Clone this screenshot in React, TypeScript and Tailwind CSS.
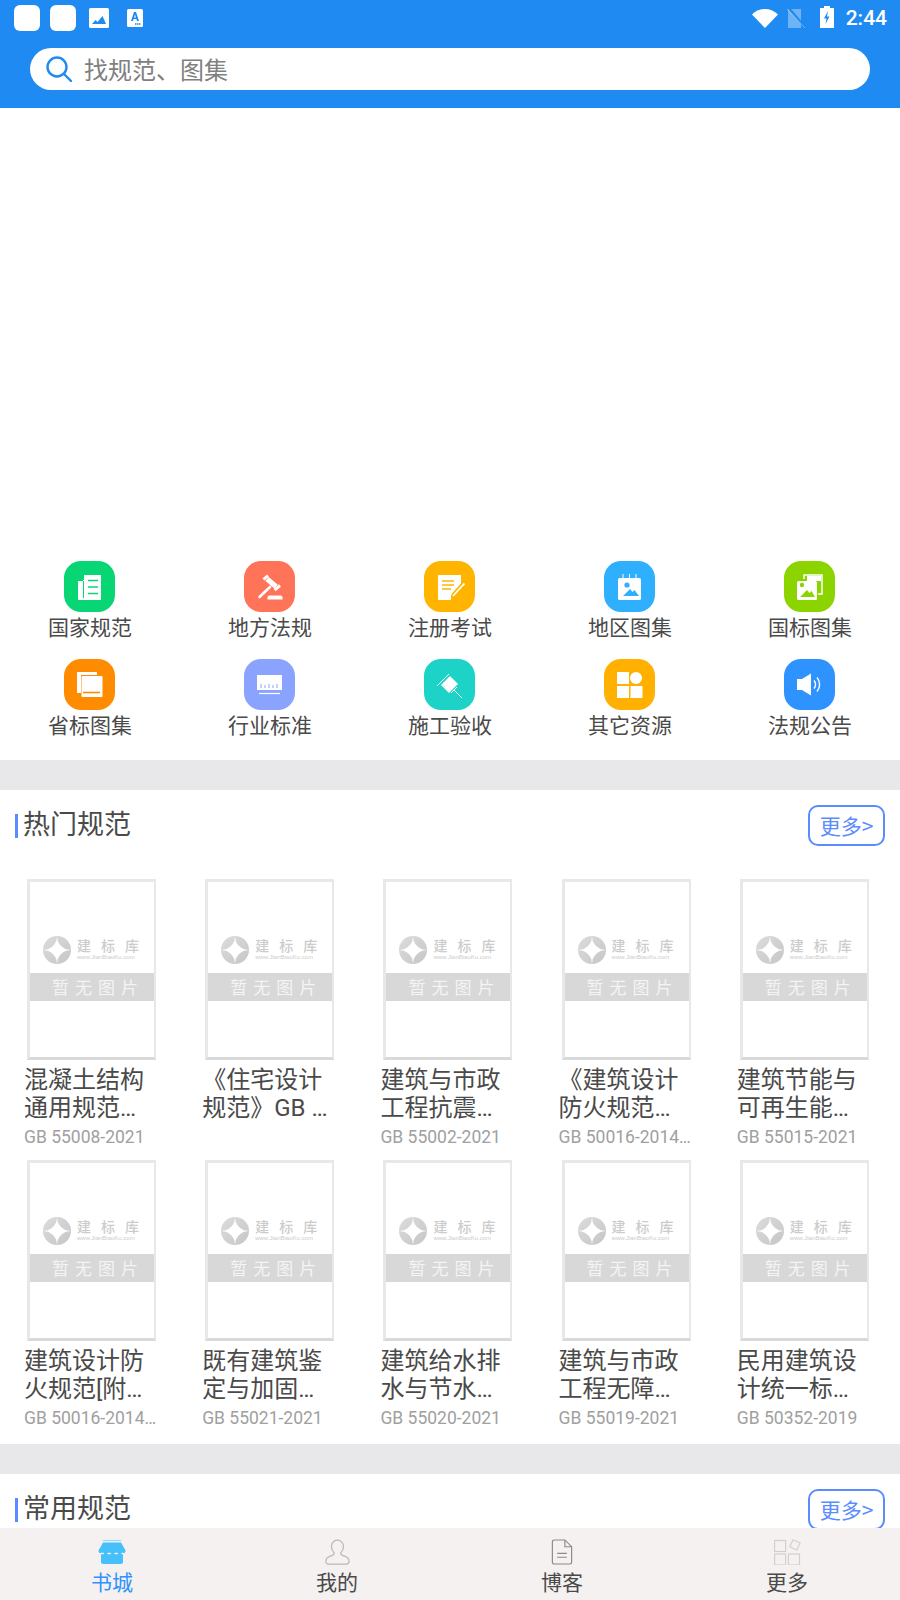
import React from "react";

const F = "font-['Noto_Sans_CJK_SC','Noto_Sans',sans-serif]";

function Ic({ children }: { children: React.ReactNode }) {
  return (
    <svg viewBox="0 0 51 51" className="w-[51px] h-[51px]" fill="none">
      {children}
    </svg>
  );
}

const icons: { label: string; bg: string; icon: React.ReactNode }[] = [
  {
    label: "国家规范",
    bg: "bg-[#08d573]",
    icon: (
      <Ic>
        <path d="M20 14h17v25H14V20h5v-1h1z" fill="#fff" />
        <path d="M19.500 20v17" stroke="#08d573" strokeWidth="1" />
        <path d="M24 19.500h10M24 26h10M24 32.500h10" stroke="#08d573" strokeWidth="1.300" />
      </Ic>
    ),
  },
  {
    label: "地方法规",
    bg: "bg-[#ff7359]",
    icon: (
      <Ic>
        <path d="M19.500 18.500L24 14.500" stroke="#fff" strokeWidth="3" />
        <path d="M30.500 29l5.500-4.500" stroke="#fff" strokeWidth="3" />
        <path d="M23 18l9 7.500" stroke="#fff" strokeWidth="5" />
        <path d="M26 26L15.500 36" stroke="#fff" strokeWidth="2.600" strokeLinecap="round" />
        <path d="M23.500 38.500h15v-2a2 2 0 00-2-2h-11a2 2 0 00-2 2z" fill="#fff" />
      </Ic>
    ),
  },
  {
    label: "注册考试",
    bg: "bg-[#ffb400]",
    icon: (
      <Ic>
        <path d="M14 14h23v9L27 34v5H14z" fill="#fff" />
        <path d="M18 20h12M18 24h12M18 28h9" stroke="#ffb400" strokeWidth="1.300" />
        <path d="M29 35l10-11 1.500-1.500" stroke="#fff" strokeWidth="1.800" />
        <path d="M28 33l9-10" stroke="#ffb400" strokeWidth="1" />
      </Ic>
    ),
  },
  {
    label: "地区图集",
    bg: "bg-[#2eb0ff]",
    icon: (
      <Ic>
        <rect x="14" y="17" width="23" height="22" rx="1.500" fill="#fff" />
        <path d="M19 13v7M25.500 13v7M32 13v7" stroke="#fff" strokeWidth="1" />
        <circle cx="23" cy="24" r="2.600" fill="#2eb0ff" />
        <path d="M19 35l7-7 2.500 3 2-2 4.500 6z" fill="#2eb0ff" />
      </Ic>
    ),
  },
  {
    label: "国标图集",
    bg: "bg-[#8bd400]",
    icon: (
      <Ic>
        <path d="M20 18v-4h18v19h-4" stroke="#fff" strokeWidth="1.500" />
        <rect x="13" y="20" width="20" height="19" rx="1.500" fill="#fff" />
        <rect x="23" y="15" width="14" height="5" fill="#fff" />
        <circle cx="18" cy="24" r="2.200" fill="#8bd400" />
        <path d="M16 36l7-7 2.500 3 2-2 3.500 6z" fill="#8bd400" />
      </Ic>
    ),
  },
  {
    label: "省标图集",
    bg: "bg-[#ff8b00]",
    icon: (
      <Ic>
        <path d="M13 13h20v3H17v18h-4z" fill="#fff" />
        <rect x="17.500" y="17" width="21" height="21" rx="1" fill="#fff" />
        <path d="M19 33.500h17" stroke="#ff8b00" strokeWidth="1.600" />
      </Ic>
    ),
  },
  {
    label: "行业标准",
    bg: "bg-[#89a3ff]",
    icon: (
      <Ic>
        <rect x="13" y="16" width="25" height="15" fill="#fff" />
        <path d="M17 25v4M21 26v3M25 25v4M29 26v3M33 25v4" stroke="#89a3ff" strokeWidth="1" />
        <path d="M15 34.500h21" stroke="#fff" strokeWidth="1.200" />
      </Ic>
    ),
  },
  {
    label: "施工验收",
    bg: "bg-[#1dd2c6]",
    icon: (
      <Ic>
        <path d="M13 27l12-12" stroke="#fff" strokeWidth="1" />
        <path d="M26 17l8 8-9 9-8-8z" fill="#fff" />
        <path d="M30 31l8 8" stroke="#fff" strokeWidth="1" />
        <path d="M33 28l-6 6" stroke="#fff" strokeWidth="1" />
      </Ic>
    ),
  },
  {
    label: "其它资源",
    bg: "bg-[#ffb000]",
    icon: (
      <Ic>
        <rect x="13" y="13" width="12" height="12" fill="#fff" />
        <circle cx="32" cy="19" r="6" fill="#fff" />
        <rect x="13" y="27" width="12" height="12" fill="#fff" />
        <rect x="26.500" y="27" width="12" height="12" fill="#fff" />
      </Ic>
    ),
  },
  {
    label: "法规公告",
    bg: "bg-[#2f93ff]",
    icon: (
      <Ic>
        <path d="M13 20h5l9-5.500v22L18 31h-5z" fill="#fff" />
        <path d="M30 21.500c2 2.500 2 5.500 0 8" stroke="#fff" strokeWidth="1.400" />
        <path d="M33 18.500c3.500 4 3.500 10 0 14" stroke="#fff" strokeWidth="1.400" />
      </Ic>
    ),
  },
];

function Logo() {
  return (
    <svg viewBox="0 0 28 28" className="w-[28px] h-[28px] shrink-0">
      <defs>
        <linearGradient id="wm" x1="0" y1="0" x2="1" y2="1">
          <stop offset="0" stopColor="#dcdcdc" />
          <stop offset="1" stopColor="#c6c6c6" />
        </linearGradient>
      </defs>
      <circle cx="14" cy="14" r="14" fill="url(#wm)" />
      <path d="M14 0L14.700 5Q17.200 10.800 23 13.300L28 14L23 14.700Q17.200 17.200 14.700 23L14 28L13.300 23Q10.800 17.200 5 14.700L0 14L5 13.300Q10.800 10.800 13.300 5z" fill="#fff" />
    </svg>
  );
}

function Book({ title, code }: { title: string[]; code: string }) {
  return (
    <div className="pl-[24px] pr-[8px]">
      <div className="ml-[3px] w-[129px] h-[181px] border-l-[3px] border-r-[2px] border-t-[3px] border-b-[3px] border-[#e8e8e8] border-b-[#d9d9d9] bg-white flex flex-col">
        <div className="h-[54px]" />
        <div className="h-[28px] flex items-center pl-[13px] gap-[6px]">
          <Logo />
          <div className="flex flex-col items-start -mt-[1px]">
            <span className="text-[14px] leading-[15px] tracking-[10px] font-medium text-[#cccccc] whitespace-nowrap">建标库</span>
            <span className="text-[6px] leading-[8px] text-[#cccccc] font-['Liberation_Sans',sans-serif] whitespace-nowrap">www.JianBiaoKu.com</span>
          </div>
        </div>
        <div className="h-[9px]" />
        <div className="h-[28px] bg-[#d8d8d8] text-[#f4f4f4] text-[17px] leading-[28px] tracking-[6px] text-center pl-[12px] whitespace-nowrap">暂无图片</div>
      </div>
      <div className="mt-[6px] h-[56px] text-[24px] leading-[28px] text-[#4a4a4a] whitespace-nowrap font-['Roboto','Noto_Sans_CJK_SC',sans-serif]">
        {title.map((t) => (
          <div key={t}>{t}</div>
        ))}
      </div>
      <div className="mt-[2px] h-[26px] text-[17.500px] leading-[26px] text-[#a0a0a0] whitespace-nowrap font-['Roboto',sans-serif]">{code}</div>
    </div>
  );
}

function Header({ title }: { title: string }) {
  return (
    <div className="flex items-start justify-between px-[15px] pt-[15px]">
      <div className="flex items-center h-[41px]">
        <div className="w-[3px] h-[24px] bg-[#5a8cff]" />
        <div className="ml-[5px] mb-[6px] text-[27px] leading-[35px] text-[#4a4a4a] whitespace-nowrap">{title}</div>
      </div>
      <div className="w-[77px] h-[41px] border-2 border-[#5a8cff] rounded-[10px] flex items-center justify-center bg-white text-[#5a8cff] text-[21px] leading-none whitespace-nowrap">
        更多&gt;
      </div>
    </div>
  );
}

const row1 = [
  { title: ["混凝土结构", "通用规范…"], code: "GB 55008-2021" },
  { title: ["《住宅设计", "规范》GB …"], code: "" },
  { title: ["建筑与市政", "工程抗震…"], code: "GB 55002-2021" },
  { title: ["《建筑设计", "防火规范…"], code: "GB 50016-2014…" },
  { title: ["建筑节能与", "可再生能…"], code: "GB 55015-2021" },
];
const row2 = [
  { title: ["建筑设计防", "火规范[附…"], code: "GB 50016-2014…" },
  { title: ["既有建筑鉴", "定与加固…"], code: "GB 55021-2021" },
  { title: ["建筑给水排", "水与节水…"], code: "GB 55020-2021" },
  { title: ["建筑与市政", "工程无障…"], code: "GB 55019-2021" },
  { title: ["民用建筑设", "计统一标…"], code: "GB 50352-2019" },
];

function NavItem({ label, active, children }: { label: string; active?: boolean; children: React.ReactNode }) {
  return (
    <div className="flex flex-col items-center pt-[11px] pr-[1px]">
      {children}
      <div className={`mt-[1px] text-[21px] leading-[30px] ${active ? "text-[#2f93ff]" : "text-[#4a4a4a]"}`}>{label}</div>
    </div>
  );
}

export default function App() {
  return (
    <div className={`w-[900px] h-[1600px] flex flex-col overflow-hidden bg-white ${F}`}>
      {/* Top bar */}
      <div className="h-[108px] shrink-0 bg-[#1f8bf2] flex flex-col">
        <div className="h-[48px] flex items-start justify-between pt-[5px] pl-[14px] pr-[13px]">
          <div className="flex items-start">
            <div className="w-[26px] h-[26px] rounded-[6px] bg-white" />
            <div className="ml-[10px] w-[26px] h-[26px] rounded-[6px] bg-white" />
            <svg viewBox="0 0 20 20" className="ml-[13px] mt-[3px] w-[20px] h-[20px]">
              <rect width="20" height="20" rx="1.500" fill="#fff" />
              <path d="M3 16l3.500-4 2 2 5-6 3.500 8z" fill="#1f8bf2" />
            </svg>
            <svg viewBox="0 0 16 18" className="ml-[18px] mt-[4px] w-[16px] h-[18px]">
              <rect width="16" height="18" rx="1.500" fill="#fff" />
              <path d="M4 12L7 3h2l3 9h-2l-.6-2H6.600L6 12zM7.100 8.500h1.800L8 5.500z" fill="#1f8bf2" />
              <path d="M8 15h6" stroke="#1f8bf2" strokeWidth="1.500" strokeDasharray="1.500 .5" />
            </svg>
          </div>
          <div className="flex items-start">
            <svg viewBox="0 0 26 20" className="mt-[3px] w-[26px] h-[20px]">
              <path d="M0 6.500C3.500 3 8 1 13 1s9.500 2 13 5.500L13 20z" fill="#fff" />
            </svg>
            <svg viewBox="0 0 20 20" className="ml-[8px] mt-[3px] w-[20px] h-[20px]">
              <path d="M2 1h13v19H2z" fill="#fff" opacity=".35" />
              <path d="M2.800 0L18.800 19" stroke="#1f8bf2" strokeWidth="2.400" />
              <path d="M1 1l18 19" stroke="#fff" strokeWidth="1" opacity=".35" />
            </svg>
            <svg viewBox="0 0 14 22" className="ml-[14px] mt-[1px] w-[14px] h-[22px]">
              <path d="M4 0h6v2h4v20H0V2h4z" fill="#fff" />
              <path d="M8 5L4 12.500h2.500L5.500 18l4-7.500H7z" fill="#1f8bf2" />
            </svg>
            <div className="ml-[12px] text-[21px] leading-[26px] font-medium text-white font-['Roboto',sans-serif]">2:44</div>
          </div>
        </div>
        <div className="mx-[30px] h-[42px] rounded-full bg-white flex items-center pl-[16px]">
          <svg viewBox="0 0 26 26" className="w-[26px] h-[26px]" fill="none" stroke="#1f8bf2" strokeWidth="2.400">
            <circle cx="11" cy="11" r="9.500" />
            <path d="M18 18l7 7" strokeLinecap="round" />
          </svg>
          <span className="ml-[12px] text-[24px] leading-none text-[#808080]">找规范、图集</span>
        </div>
      </div>

      {/* Scroll content */}
      <div className="flex-1 min-h-0 overflow-hidden">
        <div className="h-[453px]" />
        <div className="grid grid-cols-5 gap-y-[17px] h-[199px] content-start">
          {icons.map((it) => (
            <div key={it.label} className="flex flex-col items-center">
              <div className={`mr-[1px] w-[51px] h-[51px] rounded-[17px] ${it.bg}`}>{it.icon}</div>
              <div className="-mt-[2px] text-[21px] leading-[32px] text-[#4a4a4a] whitespace-nowrap">{it.label}</div>
            </div>
          ))}
        </div>
        <div className="h-[30px] bg-[#e8e8ea]" />
        <Header title="热门规范" />
        <div className="pt-[33px] grid grid-cols-5 w-[891px]">
          {row1.map((b) => (
            <Book key={b.title[0]} {...b} />
          ))}
        </div>
        <div className="mt-[10px] grid grid-cols-5 w-[891px]">
          {row2.map((b) => (
            <Book key={b.title[0]} {...b} />
          ))}
        </div>
        <div className="mt-[13px] h-[30px] bg-[#e8e8ea]" />
        <Header title="常用规范" />
      </div>

      {/* Bottom nav */}
      <div className="h-[72px] shrink-0 bg-[#f4f1f0] grid grid-cols-4">
        <NavItem label="书城" active>
          <svg viewBox="0 0 28 26" className="w-[28px] h-[26px]">
            <path d="M5 1.500h18" stroke="#8fdafc" strokeWidth="1.200" />
            <path d="M5 3.500h18l4.500 8a3 3 0 01-3 3h-21a3 3 0 01-3-3z" fill="#45c0fb" />
            <path d="M3 14h22v9a2 2 0 01-2 2H5a2 2 0 01-2-2z" fill="#45c0fb" />
            <path d="M3 14.500h22" stroke="#f4f1f0" strokeWidth="1.600" strokeDasharray="2.400 4.600" strokeLinecap="round" />
          </svg>
        </NavItem>
        <NavItem label="我的">
          <svg viewBox="0 0 28 28" className="w-[28px] h-[26px]" fill="none" stroke="#b8b8b8" strokeWidth="1.300">
            <path d="M14 1a7 7 0 017 7c0 3-1 5-3 7 0 1.500 1 2.500 4 3.500 3 1 5 3 5 5.500 0 2-1 3-3 3H5c-2 0-3-1-3-3 0-2.500 2-4.500 5-5.500 3-1 4-2 4-3.500-2-2-3-4-3-7a7 7 0 017-7z" />
          </svg>
        </NavItem>
        <NavItem label="博客">
          <svg viewBox="0 0 22 27" className="w-[22px] h-[26px]" fill="none" stroke="#8a8a8a" strokeWidth="1.200">
            <path d="M3 1h11l7 7v16a2 2 0 01-2 2H3a2 2 0 01-2-2V3a2 2 0 012-2z" />
            <path d="M14 1v7h7M6 15h10M6 19h10" />
          </svg>
        </NavItem>
        <NavItem label="更多">
          <svg viewBox="0 0 27 26" className="w-[27px] h-[26px]" fill="none" stroke="#d0d0d0" strokeWidth="1.200">
            <rect x=".6" y="1.500" width="11" height="11" />
            <rect x=".6" y="15" width="11" height="11" />
            <rect x="14.500" y="15" width="11" height="11" />
            <path d="M19 .8l7 3.200-3.200 7-7-3.200z" />
          </svg>
        </NavItem>
      </div>
    </div>
  );
}
